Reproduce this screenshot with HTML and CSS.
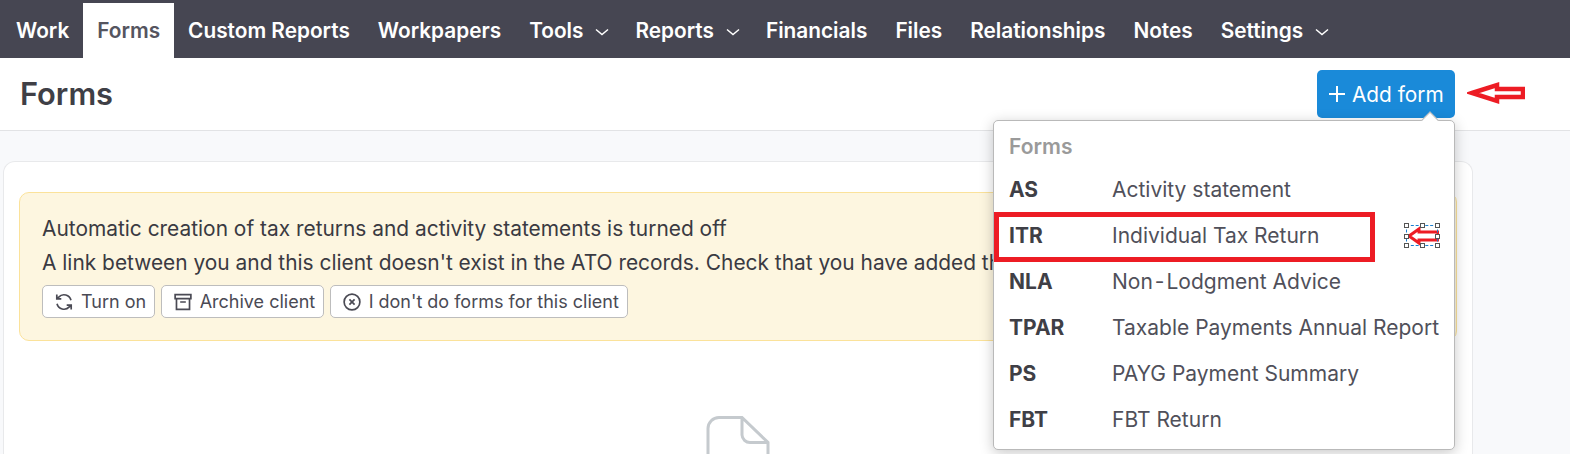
FILE: index.html
```html
<!DOCTYPE html>
<html lang="en">
<head>
  <meta charset="UTF-8">
  <title>Forms</title>
  <link rel="stylesheet" href="styles.css">
</head>
<body>
  <nav class="topnav">
    <a class="nav-item">Work</a>
    <a class="nav-item active">Forms</a>
    <a class="nav-item">Custom Reports</a>
    <a class="nav-item">Workpapers</a>
    <a class="nav-item">Tools <svg class="chevron" viewBox="0 0 14 8"><path d="M1 1.500 7 6.500l6-5"/></svg></a>
    <a class="nav-item">Reports <svg class="chevron" viewBox="0 0 14 8"><path d="M1 1.500 7 6.500l6-5"/></svg></a>
    <a class="nav-item">Financials</a>
    <a class="nav-item">Files</a>
    <a class="nav-item">Relationships</a>
    <a class="nav-item">Notes</a>
    <a class="nav-item">Settings <svg class="chevron" viewBox="0 0 14 8"><path d="M1 1.500 7 6.500l6-5"/></svg></a>
  </nav>

  <header class="page-header">
    <h1>Forms</h1>
    <button class="add-button">
      <svg class="plus" viewBox="0 0 18 18"><path d="M9 1v16M1 9h16"/></svg>
      Add form
    </button>
  </header>

  <main class="content">
    <section class="card">
      <div class="alert">
        <p>Automatic creation of tax returns and activity statements is turned off</p>
        <p>A link between you and this client doesn't exist in the ATO records. Check that you have added th</p>
        <div class="alert-actions">
          <button class="small-button">
            <svg class="small-icon" viewBox="0 0 16 16"><path d="M14.200 6.500A6.400 6.400 0 0 0 3.300 3.600L1.600 5.300M1.800 9.500a6.400 6.400 0 0 0 10.900 2.900l1.700-1.700M1.600 1.300v4h4M14.400 14.700v-4h-4"/></svg>
            Turn on
          </button>
          <button class="small-button">
            <svg class="small-icon" viewBox="0 0 16 16"><path d="M1 1.500h14v3.500H1zM2.200 5v9.500h11.600V5M5.500 8h5"/></svg>
            Archive client
          </button>
          <button class="small-button">
            <svg class="small-icon" viewBox="0 0 16 16"><circle cx="8" cy="8" r="7"/><path d="m5.700 5.700 4.600 4.600M10.300 5.700l-4.600 4.600"/></svg>
            I don't do forms for this client
          </button>
        </div>
      </div>
      <div class="empty-state">
        <svg class="file-icon" viewBox="0 0 64 80"><path d="M36 1.500H13A11 11 0 0 0 2 12.500V68a11 11 0 0 0 11 11h38a11 11 0 0 0 11-11V26.500zM36 1.500V19a8 8 0 0 0 8 7.500h18"/></svg>
      </div>
    </section>
  </main>

  <!-- dropdown opened from Add form -->
  <div class="dropdown">
    <span class="caret"></span>
    <div class="dropdown-title">Forms</div>
    <div class="dropdown-row"><b>AS</b><span>Activity statement</span></div>
    <div class="dropdown-row"><b>ITR</b><span>Individual Tax Return</span></div>
    <div class="dropdown-row"><b>NLA</b><span>Non<span class="hyphen">-</span>Lodgment Advice</span></div>
    <div class="dropdown-row"><b>TPAR</b><span>Taxable Payments Annual Report</span></div>
    <div class="dropdown-row"><b>PS</b><span>PAYG Payment Summary</span></div>
    <div class="dropdown-row"><b>FBT</b><span>FBT Return</span></div>
  </div>

  <!-- red annotations drawn on top of the screenshot -->
  <div class="red-box"></div>
  <svg class="arrow arrow-big" viewBox="0 0 58 24"><path d="M5 12 30 4V8H56V16H30V20z"/></svg>
  <svg class="arrow arrow-small" viewBox="0 0 34 22"><path d="M4 11 14 4V7H33V15H14V18z"/></svg>
  <div class="selection">
    <i class="handle h1"></i><i class="handle h2"></i><i class="handle h3"></i><i class="handle h4"></i>
    <i class="handle h5"></i><i class="handle h6"></i><i class="handle h7"></i><i class="handle h8"></i>
  </div>
</body>
</html>
```

FILE: styles.css
```css
* {
  box-sizing: border-box;
}

html, body {
  height: 454px;
  overflow: hidden;
}

body {
  margin: 0;
  position: relative;
  font-family: Inter, "Liberation Sans", sans-serif;
  background-color: #f8f9fb;
  color: #3f3f46;
}

/* top navigation */
.topnav {
  display: flex;
  align-items: flex-end;
  height: 58px;
  padding-left: 2px;
  background-color: #464652;
}

.nav-item {
  display: flex;
  align-items: center;
  gap: 12px;
  height: 55px;
  padding: 0 14px;
  font-size: 20.800px;
  font-weight: 600;
  color: #fff;
}

.nav-item.active {
  background-color: #fff;
  color: #55555f;
}

.chevron {
  width: 14px;
  height: 8px;
  margin: 3px -2px 0 0;
  fill: none;
  stroke: #fff;
  stroke-width: 1.500;
}

/* page title row */
.page-header {
  display: flex;
  align-items: center;
  justify-content: space-between;
  height: 73px;
  padding: 0 115px 2px 20px;
  background-color: #fff;
  border-bottom: 1px solid #e2e3e5;
}

h1 {
  margin: 0;
  font-size: 30.800px;
  font-weight: 600;
  color: #3f3f46;
}

.add-button {
  display: flex;
  align-items: center;
  gap: 6px;
  width: 138px;
  height: 48px;
  margin-top: 2px;
  padding: 0 11px;
  font-family: inherit;
  font-size: 20.800px;
  color: #fff;
  background-color: #1a8ad9;
  border: none;
  border-radius: 5px;
}

.plus {
  width: 18px;
  height: 18px;
  fill: none;
  stroke: #fff;
  stroke-width: 2;
}

/* main card */
.content {
  padding: 30px 97px 0 3px;
}

.card {
  height: 293px;
  padding: 30px 15px;
  overflow: hidden;
  background-color: #fff;
  border: 1px solid #e8e9eb;
  border-bottom: none;
  border-radius: 12px 12px 0 0;
}

.alert {
  height: 149px;
  padding: 24px 22px;
  font-size: 20.900px;
  color: #3a3a42;
  background-color: #fdf6e0;
  border: 1px solid #fbe29a;
  border-radius: 10px;
}

.alert p {
  margin: 0 0 10px;
  line-height: 24px;
  white-space: nowrap;
}

.alert-actions {
  display: flex;
  gap: 5.500px;
  margin-top: 1px;
}

.small-button {
  display: flex;
  align-items: center;
  gap: 8px;
  height: 33px;
  padding: 0 8px 0 12px;
  font-family: inherit;
  font-size: 18px;
  color: #4a4a54;
  background-color: #fff;
  border: 1px solid #bdbdbd;
  border-radius: 5px;
}

.small-icon {
  width: 18px;
  height: 18px;
  fill: none;
  stroke: #4a4a54;
  stroke-width: 1.500;
}

.empty-state {
  display: flex;
  justify-content: center;
  margin-top: 75px;
}

.file-icon {
  width: 64px;
  height: 80px;
  flex: none;
  fill: none;
  stroke: #c5cace;
  stroke-width: 3;
}

/* dropdown */
.dropdown {
  position: absolute;
  left: 993px;
  top: 120px;
  width: 462px;
  height: 330px;
  padding: 6px 15px;
  background-color: #fff;
  border: 1px solid #b9b9b9;
  border-radius: 5px;
  box-shadow: 0 3px 14px rgba(0, 0, 0, 0.22);
}

.caret {
  position: absolute;
  left: 430px;
  top: -7px;
  width: 12px;
  height: 12px;
  background-color: #fff;
  border-top: 1px solid #b9b9b9;
  border-left: 1px solid #b9b9b9;
  transform: rotate(45deg);
}

.dropdown-title {
  height: 39px;
  line-height: 39px;
  font-size: 21px;
  font-weight: 600;
  color: #9a9a9a;
}

.dropdown-row {
  display: grid;
  grid-template-columns: 103px 1fr;
  align-items: center;
  height: 46px;
  font-size: 21px;
  white-space: nowrap;
  color: #50505a;
}

.dropdown-row b {
  font-weight: 700;
  color: #3f3f46;
}

.hyphen {
  margin: 0 2px;
}

/* annotations */
.red-box {
  position: absolute;
  left: 994px;
  top: 212px;
  width: 381px;
  height: 50px;
  border: 5px solid #ed1c24;
}

.arrow {
  position: absolute;
  fill: #fff;
  stroke: #ed1c24;
}

.arrow-big {
  left: 1467px;
  top: 81px;
  width: 58px;
  height: 24px;
  stroke-width: 4.500;
}

.arrow-small {
  left: 1405px;
  top: 225px;
  width: 34px;
  height: 22px;
  stroke-width: 3;
}

.selection {
  position: absolute;
  left: 1406px;
  top: 225px;
  width: 32px;
  height: 21px;
  border: 1px dashed #1a7fd0;
}

.handle {
  position: absolute;
  width: 5px;
  height: 5px;
  background-color: #fff;
  border: 1px solid #555;
}

.h1 { left: -3px; top: -3px; }
.h2 { left: 13px; top: -3px; }
.h3 { right: -3px; top: -3px; }
.h4 { left: -3px; top: 8px; }
.h5 { right: -3px; top: 8px; }
.h6 { left: -3px; bottom: -3px; }
.h7 { left: 13px; bottom: -3px; }
.h8 { right: -3px; bottom: -3px; }
```
